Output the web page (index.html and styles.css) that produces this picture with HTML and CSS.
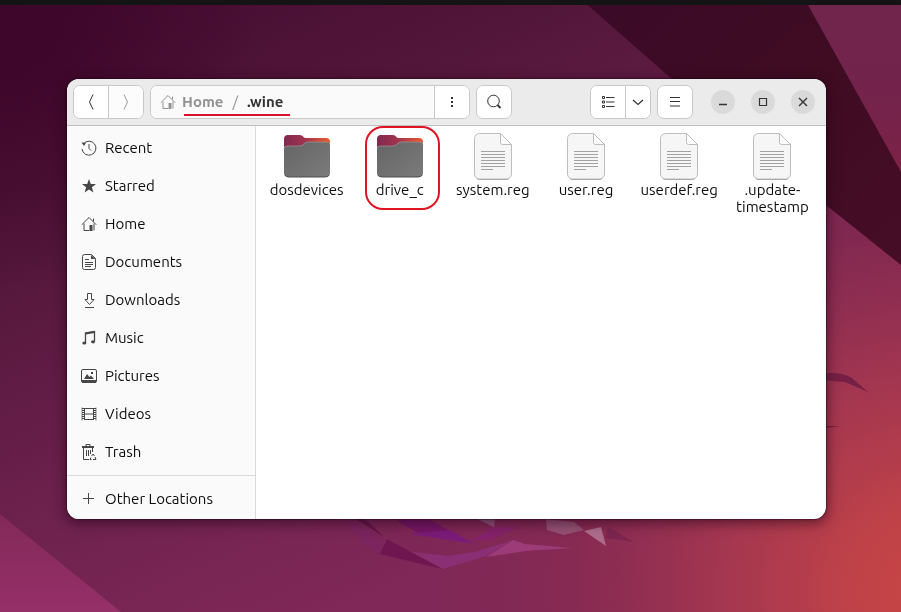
FILE: index.html
```html
<!DOCTYPE html>
<html lang="en">
<head>
<meta charset="utf-8">
<meta name="viewport" content="width=device-width, initial-scale=1">
<title>.wine</title>
<link rel="stylesheet" href="styles.css">
</head>
<body>
<svg class="wallpaper" viewBox="0 0 901 612" preserveAspectRatio="none" aria-hidden="true">
  <defs>
    <linearGradient id="base" gradientUnits="userSpaceOnUse" x1="60" y1="0" x2="330" y2="612">
      <stop offset="0" stop-color="#440b30"/><stop offset=".3" stop-color="#52163a"/><stop offset=".75" stop-color="#712350"/><stop offset="1" stop-color="#802857"/>
    </linearGradient>
    <radialGradient id="glow" gradientUnits="userSpaceOnUse" cx="930" cy="590" r="520">
      <stop offset="0" stop-color="#c84644"/><stop offset=".15" stop-color="#c04248"/><stop offset=".4" stop-color="#a8384f" stop-opacity=".9"/><stop offset=".7" stop-color="#8a2b50" stop-opacity=".6"/><stop offset="1" stop-color="#802755" stop-opacity="0"/>
    </radialGradient>
    <radialGradient id="corner" gradientUnits="userSpaceOnUse" cx="0" cy="30" r="260">
      <stop offset="0" stop-color="#3d0529"/><stop offset="1" stop-color="#3d0529" stop-opacity="0"/>
    </radialGradient>
    <linearGradient id="dark" x1="0" y1="0" x2="1" y2="1">
      <stop offset="0" stop-color="#3b0a29"/><stop offset=".5" stop-color="#3f0c22"/><stop offset="1" stop-color="#460d26"/>
    </linearGradient>
    <linearGradient id="right" x1="0" y1="0" x2="0" y2="1">
      <stop offset="0" stop-color="#70254d"/><stop offset=".6" stop-color="#74234b"/><stop offset="1" stop-color="#7e2146"/>
    </linearGradient>
    <linearGradient id="left" x1="0" y1="0" x2="0" y2="1">
      <stop offset="0" stop-color="#822958"/><stop offset="1" stop-color="#963069"/>
    </linearGradient>
  </defs>
  <path fill="url(#base)" d="M0 0h901v612H0z"/>
  <path fill="url(#corner)" d="M0 0h300v320H0z"/>
  <path fill="url(#glow)" d="M300 60h601v552H300z"/>
  <path fill="url(#dark)" d="M582 0L665 73L826 205L901 265V0z"/>
  <path fill="url(#right)" d="M805 0L808 5L901 172V0z"/>
  <path fill="url(#left)" d="M0 514L121 612H0z"/>
  <path fill="#7a2168" opacity=".5" d="M342 515L384 539L380 555L363 545z"/>
  <path fill="#631449" d="M350 515L366 520L384 537z"/>
  <path fill="#751565" d="M388 515L416 532L472 543L430 520L420 515z"/>
  <path fill="#7a1b7a" d="M410 534L450 530L474 544z"/>
  <path fill="#871f72" opacity=".7" d="M468 541L481 535L492 527L518 527L490 540z"/>
  <path fill="#8a2f73" d="M412 552L448 556L474 552L513 540L486 556L443 569z"/>
  <path fill="#6f1650" d="M387 539L442 569L380 554z"/>
  <path fill="#9d3b79" d="M486 557L513 540L525 544L572 548L526 551z"/>
  <path fill="#92547a" d="M477 519L495 519L494 527z"/>
  <path fill="#955174" d="M546 519L574 522L584 530L564 535L547 530z"/>
  <path fill="#ae6c8c" d="M584 531L601 527L606 546z"/>
  <path fill="#7c2550" d="M608 527L634 542L605 538z"/>
  <path fill="#762046" d="M820 374Q840 371 852 378L868 392L845 382L820 380zM820 426L840 426L820 429z"/>
</svg>

<svg class="sprites" aria-hidden="true">
  <symbol id="i-home" viewBox="0 0 16 16"><path d="M.8 8.700L8 1.500l7.200 7.200M3 7.500v7h5M13 7.500v7M12.500 2.500v3" fill="none" stroke="currentColor"/><path d="M8.500 9h3v6h-3z" fill="currentColor" stroke="none"/></symbol>
  <symbol id="s-folder" viewBox="0 0 48 48">
    <path fill="url(#tab)" d="M1 6a4 4 0 0 1 4-4h12q2 0 3 1.500T23 5h20a4 4 0 0 1 4 4v10H1z"/>
    <path fill="url(#front)" d="M1 16q0-3 3-3h13q2 0 4-2t4-2h19q3 0 3 3v28a4 4 0 0 1-4 4H5a4 4 0 0 1-4-4z"/>
    <path fill="none" stroke="#999" stroke-width=".7" d="M1 16q0-3 3-3h13q2 0 4-2t4-2h19q3 0 3 3"/>
    <path fill="none" stroke="#4e4e4e" d="M2 42q1 2 4 2h36q3 0 4-2"/>
  </symbol>
  <symbol id="s-file" viewBox="0 0 48 48">
    <path fill="#f6f6f6" stroke="#bdbdbd" d="M10.500 .5h21l11 11V41a5 5 0 0 1-5 5h-27a5 5 0 0 1-5-5V5.500a5 5 0 0 1 5-5z" stroke-linejoin="round"/>
    <path fill="none" stroke="#aaa" d="M8 45.500q1 1 3 1h26q2 0 3-1"/>
    <path fill="#fff" stroke="#bdbdbd" d="M31.500 .5V9.500q0 2 2 2h9z" stroke-linejoin="round"/>
    <path stroke="#a2a2a2" d="M12 18.500h24M12 21.500h24M12 24.500h24M12 27.500h24M12 30.500h24M12 33.500h24M12 36.500h12"/>
  </symbol>
  <defs>
    <linearGradient id="tab"><stop offset="0" stop-color="#822851"/><stop offset=".45" stop-color="#a0344d"/><stop offset="1" stop-color="#ed5b2c"/></linearGradient>
    <linearGradient id="front" x1="0" y1="0" x2="1" y2="1"><stop offset="0" stop-color="#656565"/><stop offset="1" stop-color="#7b7b7b"/></linearGradient>
  </defs>
</svg>

<div class="panel"></div>
<main class="desktop">
  <section class="window" aria-label="Files">
    <header class="headerbar">
      <div class="group">
        <button class="btn solo" aria-label="Back"><svg class="icon" viewBox="0 0 16 16"><path d="M10 .5L6.500 8l3.500 7.500" /></svg></button>
        <button class="btn faded" aria-label="Forward"><svg class="icon" viewBox="0 0 16 16"><path d="M6 .5L9.500 8 6 15.500"/></svg></button>
      </div>
      <div class="group pathbar">
        <nav class="crumbs" aria-label="Path">
          <svg class="icon"><use href="#i-home"/></svg>
          <span class="trail"><a class="crumb" href="#">Home</a><span class="slash">/</span><a class="crumb current" href="#">.wine</a></span>
        </nav>
        <button class="btn" aria-label="Folder menu"><svg class="icon solid" viewBox="0 0 16 16"><path d="M7 3h2v2H7zM7 7h2v2H7zM7 11h2v2H7z"/></svg></button>
      </div>
      <div class="group"><button class="btn solo" aria-label="Search"><svg class="icon" viewBox="0 0 16 16"><circle cx="7.500" cy="7" r="5.800"/><path stroke-width="1.800" d="M11.500 11l3 3"/></svg></button></div>
      <div class="spacer"></div>
      <div class="group">
        <button class="btn solo" aria-label="List view"><svg class="icon" viewBox="0 0 16 16"><path d="M2.500 2.500h2v2h-2zM2.500 7h2v2h-2zM2.500 11.500h2v2h-2zM6 3.500h8.500M6 8h8.500M6 12.500h8.500"/></svg></button>
        <button class="btn narrow" aria-label="View options"><svg class="icon" viewBox="0 0 16 16"><path stroke-width="1.200" d="M3 6l5 4.500L13 6"/></svg></button>
      </div>
      <div class="group"><button class="btn solo" aria-label="Menu"><svg class="icon" viewBox="0 0 16 16"><path d="M3 3.500h10M3 7.500h10M3 12h10"/></svg></button></div>
      <div class="controls">
        <button class="round" aria-label="Minimize"><svg class="icon" viewBox="0 0 16 16"><path stroke-width="1.300" d="M4 10.500h8"/></svg></button>
        <button class="round" aria-label="Maximize"><svg class="icon" viewBox="0 0 16 16"><path stroke-width="1.200" d="M4.500 4.500h7v7h-7z"/></svg></button>
        <button class="round" aria-label="Close"><svg class="icon" viewBox="0 0 16 16"><path stroke-width="1.400" d="M4 4l8 8M12 4l-8 8"/></svg></button>
      </div>
    </header>
    <div class="content">
      <nav class="sidebar" aria-label="Places">
        <a class="place" href="#"><svg class="icon" viewBox="0 0 16 16"><path d="M2.500 3.800A7 7 0 1 1 1 9"/><path d="M8 4v4.500l2 2"/><path class="fill" d="M.5 2.500L5 2.800 3 6z"/></svg>Recent</a>
        <a class="place" href="#"><svg class="icon solid" viewBox="0 0 16 16"><path d="M8 1l1.800 5 5.200.1-4.100 3.200 1.500 5.100L8 11.500l-4.400 2.900 1.500-5.100L1 6.100 6.200 6z"/></svg>Starred</a>
        <a class="place" href="#"><svg class="icon"><use href="#i-home"/></svg>Home</a>
        <a class="place" href="#"><svg class="icon" viewBox="0 0 16 16"><path d="M3.500.5h7l4 4v9q0 2-2 2h-9q-2 0-2-2v-11q0-2 2-2zM4 5.500h4M4 8.500h8M4 10.500h8M4 12.500h6"/><path class="fill" d="M10 1l4.500 4H10z"/></svg>Documents</a>
        <a class="place" href="#"><svg class="icon" viewBox="0 0 16 16"><path d="M6.500 1.500h4v6H13l-4.500 5L4 7.500h2.500zM4 15.500h9"/></svg>Downloads</a>
        <a class="place" href="#"><svg class="icon" viewBox="0 0 16 16"><path stroke-width="1.300" d="M4.500 12.500V3l9-1.500v10"/><path stroke-width="2" d="M4.500 3.500l9-1.500"/><ellipse class="fill" cx="3.300" cy="13" rx="2" ry="1.600"/><ellipse class="fill" cx="12" cy="11.800" rx="2" ry="1.600"/></svg>Music</a>
        <a class="place" href="#"><svg class="icon" viewBox="0 0 16 16"><rect x=".5" y="1.500" width="15" height="13" rx="1.500"/><path class="fill" d="M3 11l3-5 2.500 3L10 7.500l3 3.500zM10 4h2v2h-2zM1 12h14v3H1z"/></svg>Pictures</a>
        <a class="place" href="#"><svg class="icon" viewBox="0 0 16 16"><path d="M3.500 2v12M12.500 2v12M3.500 2.500h9M3.500 8h9M3.500 13.500h9"/><path stroke-width="2" stroke-dasharray="1 1" d="M2 2v12M14 2v12"/><path stroke-width=".7" d="M1 1.500v13M15 1.500v13"/></svg>Videos</a>
        <a class="place" href="#"><svg class="icon" viewBox="0 0 16 16"><path stroke-width="2" d="M1 3h12"/><path d="M5 2V.5h4V2M2.500 4v11.500H8M11.500 4v4M5.500 6v6M7.500 6v6M9.500 6v4"/><path d="M10.500 12l1.500-2 1.500 2M14 13l1 2.500h-3M10.500 15.500H9l1-2"/></svg>Trash</a>
        <div class="rule"></div>
        <a class="place" href="#"><svg class="icon" viewBox="0 0 16 16"><path d="M7.500 2v11M2 7.500h11"/></svg>Other Locations</a>
      </nav>
      <div class="files">
        <div class="file"><svg class="thumb"><use href="#s-folder"/></svg><span>dosdevices</span></div>
        <div class="file marked"><svg class="thumb"><use href="#s-folder"/></svg><span>drive_c</span></div>
        <div class="file"><svg class="thumb"><use href="#s-file"/></svg><span>system.reg</span></div>
        <div class="file"><svg class="thumb"><use href="#s-file"/></svg><span>user.reg</span></div>
        <div class="file"><svg class="thumb"><use href="#s-file"/></svg><span>userdef.reg</span></div>
        <div class="file"><svg class="thumb"><use href="#s-file"/></svg><span>.update-<br>timestamp</span></div>
      </div>
    </div>
  </section>
</main>
</body>
</html>
```
FILE: styles.css
```css
*, *::after { box-sizing: border-box; }
body {
  margin: 0;
  min-height: 100vh;
  display: flex;
  flex-direction: column;
  background: #5f1c45;
  color: #0c0c0c;
  font: 15px/17px Ubuntu, "Noto Sans", sans-serif;
}
a { color: inherit; text-decoration: none; }
.wallpaper { position: fixed; inset: 0; width: 100%; height: 100%; z-index: -1; }
.sprites { position: absolute; width: 0; height: 0; }
.panel { height: 5px; background: #141414; }
.desktop { flex: 1; display: flex; padding: 74px 75px 93px 67px; }
.window {
  flex: 1;
  min-width: 0;
  display: flex;
  flex-direction: column;
  border-radius: 12px;
  overflow: hidden;
  background: #fff;
  box-shadow: 0 0 1px 1px rgba(30, 0, 20, .4), 0 3px 12px 2px rgba(30, 0, 20, .5);
}
.headerbar {
  display: flex;
  align-items: center;
  gap: 6px;
  height: 47px;
  padding: 0 11px 0 6px;
  background: #ebebeb;
  border-bottom: 1px solid #bfbfbf;
}
.group {
  display: flex;
  height: 34px;
  border: 1px solid #c8c8c8;
  border-radius: 7px;
  background: #fff;
  overflow: hidden;
}
.btn {
  display: flex;
  align-items: center;
  justify-content: center;
  width: 35px;
  padding: 0;
  border: 0;
  background: #fff;
  color: #333;
}
.btn + .btn, .crumbs + .btn { border-left: 1px solid #c8c8c8; }
.btn.solo { width: 34px; }
.btn.narrow { width: 25px; }
.btn.faded { color: #999; background: #fcfcfc; }
.pathbar { flex: 0 1 320px; }
.crumbs { flex: 1; display: flex; align-items: center; gap: 6px; padding-left: 9px; background: #fafafa; color: #929292; font-weight: 700; }
.trail { position: relative; display: flex; gap: 9px; line-height: 18px; }
.trail::after { content: ""; position: absolute; left: 2px; right: -7px; bottom: -5px; height: 2px; background: #d8122a; }
.slash { font-weight: 400; }
.current { color: #333; }
.spacer { flex: 1; }
.icon { flex: none; width: 16px; height: 16px; fill: none; stroke: currentColor; }
.solid, .fill { fill: currentColor; stroke: none; }
.controls { display: flex; gap: 16px; padding-left: 12px; }
.round {
  display: flex;
  align-items: center;
  justify-content: center;
  width: 24px;
  height: 24px;
  padding: 0;
  border: 0;
  border-radius: 50%;
  background: #dadada;
  color: #333;
}
.content { flex: 1; display: flex; }
.sidebar { width: 189px; padding-top: 3px; background: #fafafa; border-right: 1px solid #d9d9d9; }
.place { display: flex; align-items: center; gap: 8px; height: 38px; padding-left: 14px; line-height: 18px; }
.place .icon { color: #474747; }
.rule { height: 1px; margin: 4px 0; background: #d9d9d9; }
.files {
  flex: 1;
  display: grid;
  grid-template-columns: repeat(auto-fill, minmax(93px, 1fr));
  align-content: start;
  padding: 7px 7px 0 4px;
}
.file { position: relative; display: flex; flex-direction: column; align-items: center; text-align: center; }
.thumb { width: 48px; height: 48px; }
.marked::after {
  content: "";
  position: absolute;
  top: -7px;
  left: 50%;
  width: 75px;
  height: 84px;
  margin-left: -35px;
  border: 2px solid #df1523;
  border-radius: 18px;
}
```
